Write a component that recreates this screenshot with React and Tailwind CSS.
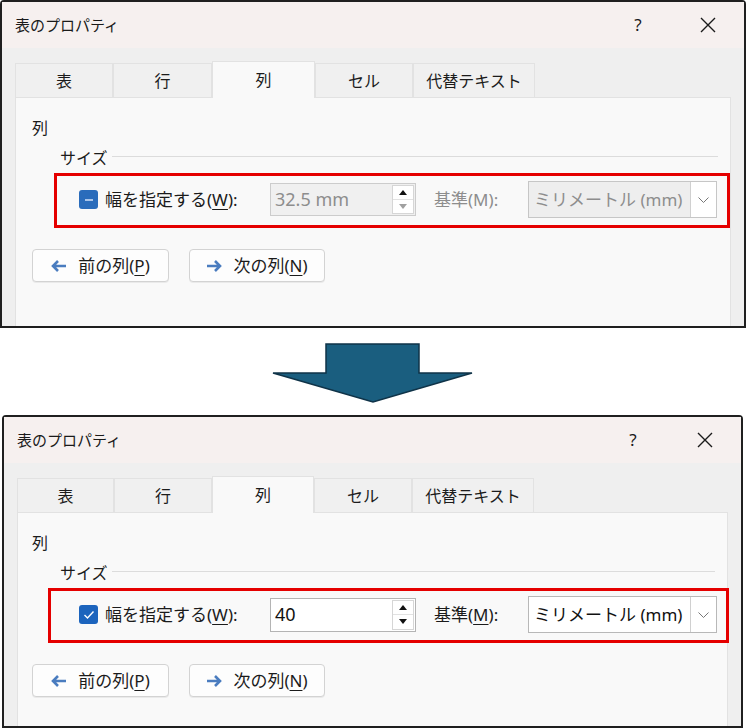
import React from "react";

const FONT = "font-['Noto_Sans','Noto_Sans_CJK_JP',sans-serif]";

function Tabs({ widths }) {
  const names = ["表", "行", "列", "セル", "代替テキスト"];
  return (
    <div className="flex items-end pl-[13px] relative z-10 -mb-px">
      {names.map((n, i) => {
        const active = i === 2;
        return (
          <div
            key={n}
            style={{ width: widths[i] }}
            className={
              active
                ? "h-[37px] bg-[#f9f9f9] border border-b-0 border-[#e2e2e2] flex items-center justify-center text-[16px] text-[#1b1b1b]"
                : "h-[35px] bg-[#f0f0f0] border border-[#e2e2e2] flex items-center justify-center text-[16px] text-[#1b1b1b]"
            }
          >
            {n}
          </div>
        );
      })}
    </div>
  );
}

function ArrowIcon({ dir }) {
  return (
    <svg width="16" height="14" viewBox="0 0 16 14">
      {dir === "left" ? (
        <path d="M7 2 L2 7 L7 12 M2.5 7 H15" fill="none" stroke="#4a7cbf" strokeWidth="2.6" strokeLinejoin="miter" />
      ) : (
        <path d="M9 2 L14 7 L9 12 M13.5 7 H1" fill="none" stroke="#4a7cbf" strokeWidth="2.6" strokeLinejoin="miter" />
      )}
    </svg>
  );
}

function NavButton({ dir, label, ul, width }) {
  return (
    <div
      style={{ width }}
      className="h-[33px] bg-[#fdfdfd] border border-[#d3d3d3] rounded-[4px] shadow-[0_1px_0_rgba(0,0,0,0.06)] flex items-center justify-center gap-[11px] text-[17px] text-[#1b1b1b]"
    >
      <ArrowIcon dir={dir} />
      <span>
        {label}(<span className="underline underline-offset-[3px]">{ul}</span>)
      </span>
    </div>
  );
}

function Dialog({ enabled, className, widths, redLeft, redRight, shift, inputH, titleQ }) {
  return (
    <div className={"border-2 border-[#1f1f1f] flex flex-col bg-[#efefef] rounded-t-[4px] " + className}>
      <div className="h-[46px] bg-[#f6f0ef] flex items-center justify-between pl-[13px] pr-[16px]">
        <span className="text-[15px] text-[#1a1a1a]">表のプロパティ</span>
        <div className="flex items-center" style={{ gap: titleQ }}>
          <span className="w-[40px] text-center text-[17px] text-[#1a1a1a]">?</span>
          <svg width="40" height="18" viewBox="0 0 40 18">
            <path d="M13 2 L27 16 M27 2 L13 16" stroke="#1a1a1a" strokeWidth="1.4" />
          </svg>
        </div>
      </div>
      <div className="pt-[13px] flex-1 flex flex-col">
        <Tabs widths={widths} />
        <div className="mx-[13px] flex-1 bg-[#f9f9f9] border border-b-0 border-[#e2e2e2] relative">
          <div className="pt-[19px]" style={{ paddingLeft: 16 + shift }}>
            <div className="text-[16px] leading-[22px] text-[#1b1b1b]">列</div>
            <div className="flex items-center mt-[8px] pl-[28px] pr-[12px]">
              <span className="text-[16px] leading-[22px] text-[#1b1b1b]">サイズ</span>
              <div className="flex-1 h-px bg-[#dcdcdc] ml-[4px] mt-[-3px]" />
            </div>
            <div className="h-[37px] mt-[12px] flex items-center pl-[47px] text-[17px]">
              {enabled ? (
                <div className="w-[19px] h-[19px] rounded-[3px] bg-[#1c64bd] flex items-center justify-center">
                  <svg width="12" height="10" viewBox="0 0 12 10">
                    <path d="M1.5 5 L4.5 8 L10.5 1.5" fill="none" stroke="#fff" strokeWidth="1.4" />
                  </svg>
                </div>
              ) : (
                <div className="w-[19px] h-[19px] rounded-[3px] bg-[#2a6cbb] flex items-center justify-center">
                  <div className="w-[8px] h-[2px] bg-[#a9c5ea]" />
                </div>
              )}
              <span className="ml-[7px] w-[165px] text-[#1b1b1b] whitespace-nowrap">
                幅を指定する(<span className="underline underline-offset-[3px]">W</span>):
              </span>
              <div
                style={{ height: inputH }}
                className={
                  "w-[146px] border flex items-stretch " +
                  (enabled ? "bg-white border-[#b4b4b4]" : "bg-[#f0f0f0] border-[#cccccc]")
                }
              >
                <div className={"flex-1 flex items-center pl-[4px] text-[18px] " + (enabled ? "text-[#111]" : "text-[#8d8d8d]")}>
                  {enabled ? "40" : "32.5 mm"}
                </div>
                <div className="w-[22px] my-[1px] mr-[1px] border border-[#d6d6d6] flex flex-col bg-white">
                  <div className="flex-1 flex items-center justify-center border-b border-[#e2e2e2]">
                    <svg width="8" height="5" viewBox="0 0 8 5"><path d="M0 5 L4 0 L8 5Z" fill="#111" /></svg>
                  </div>
                  <div className="flex-1 flex items-center justify-center">
                    <svg width="8" height="5" viewBox="0 0 8 5"><path d="M0 0 L4 5 L8 0Z" fill={enabled ? "#111" : "#a0a0a0"} /></svg>
                  </div>
                </div>
              </div>
              <span className={"ml-[18px] w-[94px] whitespace-nowrap " + (enabled ? "text-[#1b1b1b]" : "text-[#8d8d8d]")}>
                基準(
                {enabled ? <span className="underline underline-offset-[3px]">M</span> : "M"}
                ):
              </span>
              <div className={"w-[189px] h-[37px] border flex items-stretch " + (enabled ? "bg-white border-[#b8b8b8]" : "bg-[#eeeeee] border-[#c6c6c6]")}>
                <div className={"flex-1 flex items-center pl-[5px] text-[17px] whitespace-nowrap " + (enabled ? "text-[#111]" : "text-[#8d8d8d]")}>
                  ミリメートル (mm)
                </div>
                <div className="w-[26px] bg-white border-l border-[#d0d0d0] flex items-center justify-center">
                  <svg width="11" height="6" viewBox="0 0 11 6"><path d="M0.5 0.5 L5.5 5.5 L10.5 0.5" fill="none" stroke="#777" strokeWidth="1" /></svg>
                </div>
              </div>
            </div>
            <div className="flex gap-[20px] mt-[31px]">
              <NavButton dir="left" label="前の列" ul="P" width={137} />
              <NavButton dir="right" label="次の列" ul="N" width={136} />
            </div>
          </div>
          <div
            className="absolute top-[75px] h-[55px] border-[3px] border-[#e50000] pointer-events-none"
            style={{ left: redLeft, right: redRight }}
          />
        </div>
      </div>
    </div>
  );
}

export default function App() {
  return (
    <div className={"w-[750px] h-[728px] bg-white overflow-hidden " + FONT}>
      <Dialog
        enabled={false}
        className="w-[746px] h-[328px]"
        widths={[98, 99, 103, 98, 122]}
        redLeft={38}
        redRight={0}
        shift={0}
        inputH={33}
        titleQ={30}
      />
      <div className="h-[87px] pl-[270px] pt-[13px]">
        <svg width="206" height="64" viewBox="0 0 206 64">
          <polygon
            points="56,3 149,3 149,32 202,32 103,61 3,32 56,32"
            fill="#1a5e7f"
            stroke="#0f3348"
            strokeWidth="1.5"
          />
        </svg>
      </div>
      <Dialog
        enabled={true}
        className="ml-[2px] w-[741px] h-[313px]"
        widths={[97, 98, 102, 98, 122]}
        redLeft={30}
        redRight={-2}
        shift={-2}
        inputH={34}
        titleQ={32}
      />
    </div>
  );
}
